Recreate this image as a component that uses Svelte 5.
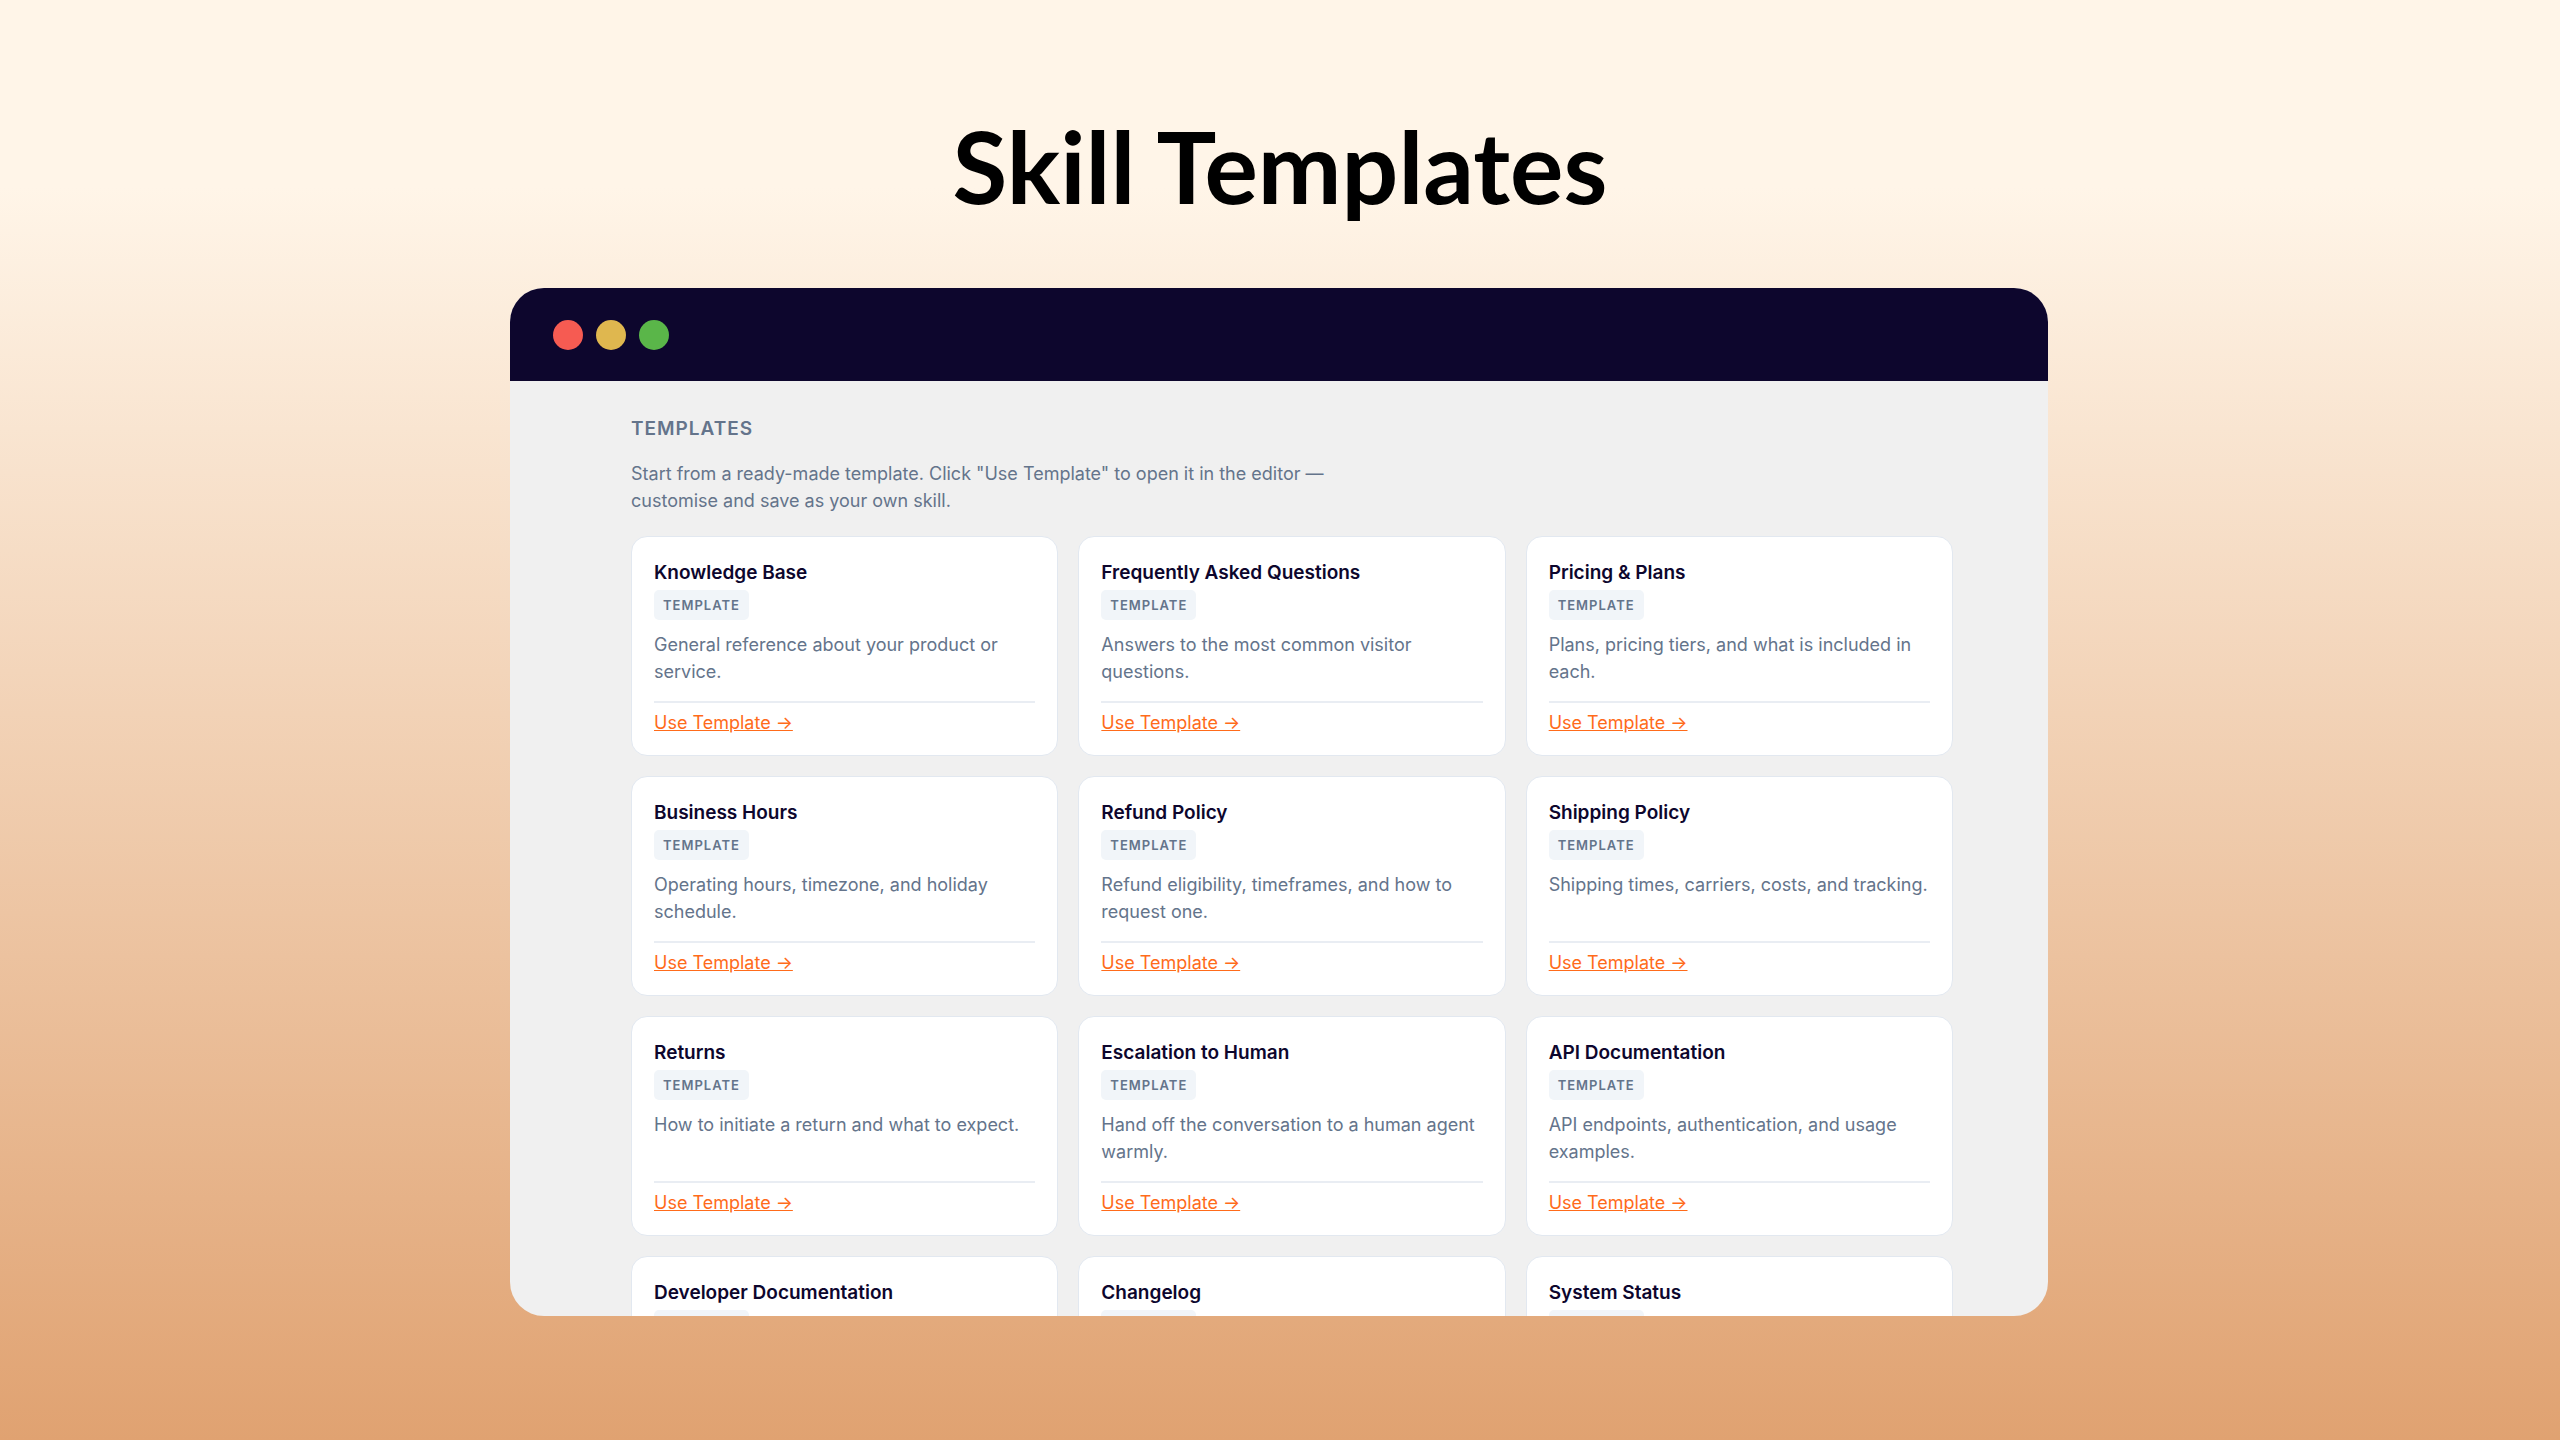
<script>
  const templates = [
    { name: 'Knowledge Base', text: 'General reference about your product or service.' },
    { name: 'Frequently Asked Questions', text: 'Answers to the most common visitor questions.' },
    { name: 'Pricing & Plans', text: 'Plans, pricing tiers, and what is included in each.' },
    { name: 'Business Hours', text: 'Operating hours, timezone, and holiday schedule.' },
    { name: 'Refund Policy', text: 'Refund eligibility, timeframes, and how to request one.' },
    { name: 'Shipping Policy', text: 'Shipping times, carriers, costs, and tracking.' },
    { name: 'Returns', text: 'How to initiate a return and what to expect.' },
    { name: 'Escalation to Human', text: 'Hand off the conversation to a human agent warmly.' },
    { name: 'API Documentation', text: 'API endpoints, authentication, and usage examples.' },
    { name: 'Developer Documentation', text: '' },
    { name: 'Changelog', text: '' },
    { name: 'System Status', text: '' },
  ];
</script>

<main>
  <h1>Skill Templates</h1>
  <section class="window" aria-labelledby="templates-heading">
    <div class="bar">
      <span class="dot red"></span>
      <span class="dot yellow"></span>
      <span class="dot green"></span>
    </div>
    <div class="content">
      <h2 id="templates-heading">TEMPLATES</h2>
      <p class="intro">
        Start from a ready-made template. Click "Use Template" to open it in the editor — customise and save as your own skill.
      </p>
      <div class="grid">
        {#each templates as t}
          <article class="card">
            <h3>{t.name}</h3>
            <span class="badge">TEMPLATE</span>
            {#if t.text}
              <p class="desc">{t.text}</p>
              <div class="foot"><a href="#use">Use Template →</a></div>
            {/if}
          </article>
        {/each}
      </div>
    </div>
  </section>
</main>

<style>
  :global(body) {
    margin: 0;
  }
  main {
    box-sizing: border-box;
    height: 100vh;
    padding: 109px 20% 124px;
    display: flex;
    flex-direction: column;
    gap: 67px;
    overflow: hidden;
    font-family: Inter, sans-serif;
    background: linear-gradient(180deg, #fff5e8 13%, #e0a271 100%);
  }
  h1 {
    margin: 0;
    text-align: center;
    font: 700 100px/112px Lato, sans-serif;
    color: #000;
  }
  .window {
    flex: 1;
    min-height: 0;
    display: flex;
    flex-direction: column;
    border-radius: 34px;
    overflow: hidden;
    background: #f0f0f0;
    margin: 0 0 0 -2px;
  }
  .bar {
    flex: none;
    display: flex;
    align-items: center;
    gap: 13px;
    height: 93px;
    padding: 0 43px;
    background: #0d062d;
  }
  .dot {
    width: 30px;
    height: 30px;
    border-radius: 50%;
  }
  .red {
    background: #f65b52;
  }
  .yellow {
    background: #dfb74f;
  }
  .green {
    background: #5ab649;
  }
  .content {
    padding: 33px 95px 0 121px;
  }
  h2 {
    margin: 0;
    font-size: 19px;
    line-height: 30px;
    font-weight: 600;
    letter-spacing: 1px;
    color: #64748b;
  }
  .intro {
    margin: 16px 0 22px;
    max-width: 720px;
    font-size: 18px;
    line-height: 27px;
    color: #64748b;
  }
  .grid {
    display: grid;
    grid-template-columns: repeat(3, 1fr);
    gap: 20px;
  }
  .card {
    display: flex;
    flex-direction: column;
    align-items: flex-start;
    padding: 21px 22px 19px;
    border: 1px solid #e2e8f0;
    border-radius: 16px;
    background: #fff;
  }
  h3 {
    margin: 0;
    font-size: 19px;
    line-height: 30px;
    font-weight: 600;
    color: #0d062d;
  }
  .badge {
    margin-top: 2px;
    padding: 0 9px;
    border-radius: 5px;
    font-size: 13px;
    line-height: 30px;
    font-weight: 600;
    letter-spacing: 1px;
    color: #64748b;
    background: #f1f5f9;
  }
  .desc {
    margin: 11px 0 16px;
    min-height: 54px;
    font-size: 18px;
    line-height: 27px;
    color: #64748b;
  }
  .foot {
    align-self: stretch;
    border-top: 2px solid #e9edf3;
    padding-top: 6px;
    font-size: 18px;
    line-height: 27px;
  }
  a {
    color: #ff6b1a;
    text-decoration: underline;
  }
</style>
